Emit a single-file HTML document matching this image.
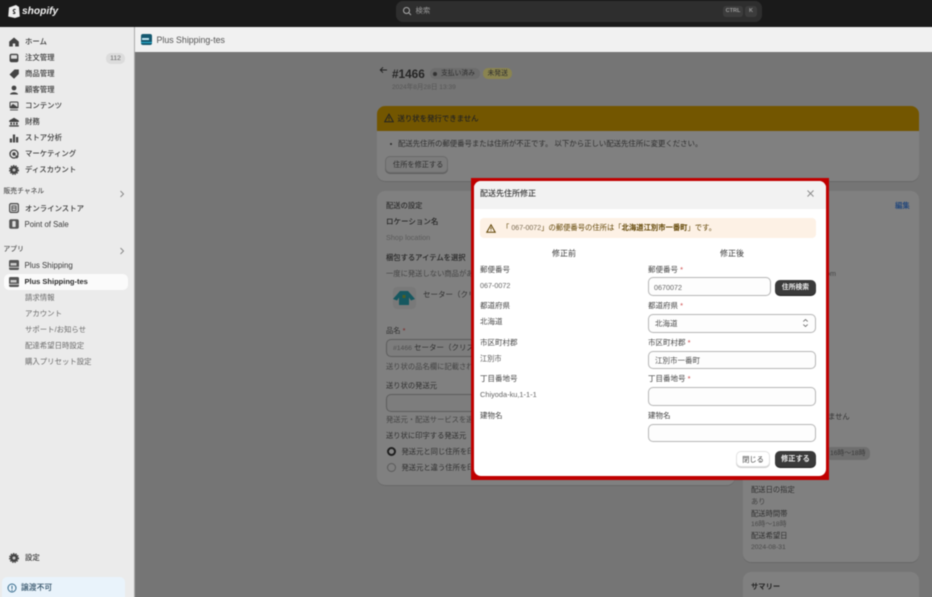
<!DOCTYPE html>
<html lang="ja"><head><meta charset="utf-8"><title>Plus Shipping-tes</title>
<style>
*{box-sizing:border-box}
html,body{margin:0;padding:0;width:932px;height:597px;overflow:hidden;background:#757575}
body{font-family:"Liberation Sans","Noto Sans CJK JP",sans-serif;position:relative;color:#303030}
#r{position:absolute;left:-6px;top:-6px;width:944px;height:609px;overflow:hidden;filter:blur(.5px)}
#i{position:absolute;left:6px;top:6px;width:932px;height:597px}
.a{position:absolute}
.t{position:absolute;white-space:nowrap;line-height:12px;font-size:7.4px}
.s{color:#3a3a3a;font-weight:500;font-size:7.4px}
.sub{color:#6a6a6a;font-size:7.4px}
.ic{position:absolute;width:10px;height:10px}
.bg{color:#2e2e2e;font-size:7.3px}
.bl{color:#252525}
.card{position:absolute;background:#808080;border-radius:8px;box-shadow:0 1px 0 #6a6a6a}
.l{color:#444;font-size:7.5px}
.v{color:#666;font-size:7.2px}
.inp{position:absolute;background:#fdfdfd;border:1px solid #b5b5b5;border-radius:5px;height:18.5px;font-size:7.5px;line-height:17px;padding-left:6px;color:#4a4a4a;white-space:nowrap}
.req{color:#c44}
.btn{position:absolute;border-radius:5px;font-size:7.2px;text-align:center;white-space:nowrap}
.dark{background:#3a3a3a;color:#eee;font-weight:700;box-shadow:0 1px 0 #222}
</style></head><body><div id="r"><div id="i">

<!-- top bar -->
<div class="a" style="left:-6px;top:-6px;width:944px;height:33px;background:#1a1a1a"></div>
<svg class="a" style="left:8px;top:4px" width="12" height="14" viewBox="0 0 12 14"><path d="M1 3.500 L8 1 L11 3 L11.800 12.500 L7 14 L.2 12.500Z" fill="#eee"/><path d="M7.600 5.600c-.5-.3-2.200-.5-2.400.9-.1 1.300 2 1.300 1.800 2.500-.2.800-1.400.6-2 .2" stroke="#1a1a1a" stroke-width="1" fill="none"/></svg>
<div class="t" style="left:22px;top:6px;color:#f0f0f0;font-size:10.200px;font-weight:700;font-style:italic">shopify</div>
<div class="a" style="left:396px;top:1px;width:366px;height:21px;background:#2e2e2e;border-radius:7px"></div>
<svg class="a" style="left:402px;top:6px" width="10" height="10" viewBox="0 0 10 10"><circle cx="4.500" cy="4.500" r="3" stroke="#aaa" fill="none"/><path d="M7 7l2 2" stroke="#aaa"/></svg>
<div class="t" style="left:415.500px;top:5px;color:#999;font-size:7.400px">検索</div>
<div class="a" style="left:723px;top:6px;width:20px;height:11px;background:#3c3c3c;border-radius:3px;color:#9a9a9a;font-size:5.500px;line-height:11px;text-align:center;font-weight:700">CTRL</div>
<div class="a" style="left:745px;top:6px;width:12px;height:11px;background:#3c3c3c;border-radius:3px;color:#9a9a9a;font-size:5.500px;line-height:11px;text-align:center;font-weight:700">K</div>

<!-- sidebar -->
<div class="a" style="left:-6px;top:27px;width:140px;height:576px;background:#ebebeb"></div>
<div class="a" style="left:134px;top:27px;width:1px;height:576px;background:#a9a9a9"></div>

<svg class="ic" style="left:9px;top:37px" viewBox="0 0 10 10"><path d="M5 .5 9.800 4.600V9.500H6.200V6.500H3.800V9.500H.2V4.600Z" fill="#444"/></svg>
<div class="t s" style="left:25px;top:36px">ホーム</div>
<svg class="ic" style="left:9px;top:53px" viewBox="0 0 10 10"><rect x=".6" y=".8" width="8.800" height="8.400" rx="2" fill="#444"/><rect x="2" y="2.100" width="6" height="3.600" rx=".5" fill="#ddd"/></svg>
<div class="t s" style="left:25px;top:52px">注文管理</div>
<div class="a" style="left:106px;top:52.500px;width:19px;height:11px;background:#dcdcdc;border-radius:5px;color:#666;font-size:6.800px;line-height:11px;text-align:center">112</div>
<svg class="ic" style="left:9px;top:69px" viewBox="0 0 10 10"><path d="M.5 5.500 5.500.5H9.800V5L5 9.800Z" fill="#444"/></svg>
<div class="t s" style="left:25px;top:68px">商品管理</div>
<svg class="ic" style="left:9px;top:85px" viewBox="0 0 10 10"><circle cx="5" cy="3" r="2.400" fill="#444"/><path d="M1 9.500C1 6.500 9 6.500 9 9.500Z" fill="#444"/></svg>
<div class="t s" style="left:25px;top:84px">顧客管理</div>
<svg class="ic" style="left:9px;top:101px" viewBox="0 0 10 10"><rect x="1" y="1" width="8" height="6" rx="1" fill="#ddd" stroke="#444"/><path d="M1.600 6 4 3.500 8.400 6.500H1.600ZM1 8.900H9" fill="#444" stroke="#444" stroke-width=".9"/></svg>
<div class="t s" style="left:25px;top:100px">コンテンツ</div>
<svg class="ic" style="left:9px;top:117px" viewBox="0 0 10 10"><path d="M5 .8 9.800 3.500V5H.2V3.500ZM1.300 5.500H3V7.800H1.300ZM4.200 5.500H5.800V7.800H4.200ZM7 5.500H8.700V7.800H7ZM.2 8.200H9.800V9.600H.2Z" fill="#444"/></svg>
<div class="t s" style="left:25px;top:116px">財務</div>
<svg class="ic" style="left:9px;top:133px" viewBox="0 0 10 10"><path d="M.8 5.500H3V9.500H.8ZM3.900 1.500H6.100V9.500H3.900ZM7 4H9.200V9.500H7Z" fill="#444"/></svg>
<div class="t s" style="left:25px;top:132px">ストア分析</div>
<svg class="ic" style="left:9px;top:149px" viewBox="0 0 10 10"><circle cx="5" cy="5" r="4" stroke="#444" stroke-width="1.300" fill="none"/><circle cx="5" cy="5" r="1.700" fill="#444"/><path d="M6 6 9.800 7.500 7.800 9.800Z" fill="#444"/></svg>
<div class="t s" style="left:25px;top:148px">マーケティング</div>
<svg class="ic" style="left:9px;top:165px" viewBox="0 0 10 10"><circle cx="5" cy="5" r="4" fill="#444"/><circle cx="5" cy="5" r="4.500" fill="none" stroke="#444" stroke-width="1" stroke-dasharray="1.500 1"/><circle cx="5" cy="5" r="1.500" fill="#c4c4c4"/></svg>
<div class="t s" style="left:25px;top:164px">ディスカウント</div>

<div class="t" style="left:3.500px;top:186px;color:#555;font-size:6.800px;font-weight:500">販売チャネル</div>
<svg class="a" style="left:119px;top:190px" width="6" height="8" viewBox="0 0 6 8"><path d="M1.500 1 4.500 4 1.500 7" stroke="#8a8a8a" fill="none"/></svg>
<svg class="ic" style="left:9px;top:203px" viewBox="0 0 10 10"><rect x=".6" y=".6" width="8.800" height="8.800" rx="1.500" fill="#ccc" stroke="#444" stroke-width="1.100"/><path d="M2.800 3H7.200M3 3V7.500H7V3M3 5H7" stroke="#444" stroke-width=".8" fill="none"/></svg>
<div class="t s" style="left:25px;top:202.500px">オンラインストア</div>
<svg class="ic" style="left:9px;top:219px" viewBox="0 0 10 10"><rect x=".2" y=".2" width="9.600" height="9.600" rx="1.800" fill="#555"/><rect x="3.300" y="2" width="3.400" height="6" rx=".8" fill="#ddd"/></svg>
<div class="t s" style="left:24.500px;top:218.500px;font-size:7.800px">Point of Sale</div>

<div class="t" style="left:3.500px;top:243.500px;color:#555;font-size:6.800px;font-weight:500">アプリ</div>
<svg class="a" style="left:119px;top:247px" width="6" height="8" viewBox="0 0 6 8"><path d="M1.500 1 4.500 4 1.500 7" stroke="#8a8a8a" fill="none"/></svg>
<svg class="ic" style="left:9px;top:260px" viewBox="0 0 10 10"><rect width="10" height="10" rx="1.500" fill="#555"/><rect x="1.500" y="3" width="6" height="2.500" fill="#ccc"/><rect y="6.800" width="10" height="1" fill="#ccc"/></svg>
<div class="t s" style="left:24.500px;top:259.500px;font-size:7.900px">Plus Shipping</div>
<div class="a" style="left:4px;top:274px;width:124px;height:16px;background:#fbfbfb;border-radius:5px"></div>
<svg class="ic" style="left:9px;top:276.500px" viewBox="0 0 10 10"><rect width="10" height="10" rx="1.500" fill="#555"/><rect x="1.500" y="3" width="6" height="2.500" fill="#ccc"/><rect y="6.800" width="10" height="1" fill="#ccc"/></svg>
<div class="t" style="left:24.500px;top:275.500px;color:#2a2a2a;font-weight:700;font-size:7.500px">Plus Shipping-tes</div>
<div class="t sub" style="left:25px;top:291.500px">請求情報</div>
<div class="t sub" style="left:25px;top:307.500px">アカウント</div>
<div class="t sub" style="left:25px;top:323.500px">サポート/お知らせ</div>
<div class="t sub" style="left:25px;top:339.500px">配達希望日時設定</div>
<div class="t sub" style="left:25px;top:355.500px">購入プリセット設定</div>

<svg class="ic" style="left:9px;top:553px" viewBox="0 0 10 10"><circle cx="5" cy="5" r="4" fill="#444"/><circle cx="5" cy="5" r="4.500" fill="none" stroke="#444" stroke-width="1" stroke-dasharray="1.500 1"/><circle cx="5" cy="5" r="1.500" fill="#c4c4c4"/></svg>
<div class="t s" style="left:25px;top:551.500px">設定</div>
<div class="a" style="left:2px;top:577px;width:123px;height:26px;background:#e9f3fb;border-radius:5px"></div>
<svg class="ic" style="left:7px;top:582.500px" viewBox="0 0 10 10"><circle cx="5" cy="5" r="4" stroke="#356a8c" fill="none"/><path d="M5 2.800V6" stroke="#356a8c"/><circle cx="5" cy="7.400" r=".6" fill="#356a8c"/></svg>
<div class="t" style="left:21px;top:581.500px;color:#2f4f66;font-weight:500;font-size:7.800px">譲渡不可</div>

<!-- app bar -->
<div class="a" style="left:135px;top:27px;width:803px;height:25px;background:#f1f1f1"></div>
<div class="a" style="left:141px;top:34px;width:11px;height:11px;border-radius:2px;background:#14586f"></div>
<div class="a" style="left:142px;top:38px;width:7px;height:2px;background:#bfe3ee"></div>
<div class="a" style="left:141px;top:41.500px;width:11px;height:1px;background:#2ab0d0"></div>
<div class="t" style="left:156.500px;top:34px;color:#555;font-size:8.800px">Plus Shipping-tes</div>

<!-- dimmed content -->
<div class="a" style="left:135px;top:52px;width:803px;height:551px;background:#757575"></div>
<svg class="a" style="left:379px;top:66px" width="9" height="8" viewBox="0 0 9 8"><path d="M8 4H1.500M4 1.300 1.300 4 4 6.700" stroke="#222" stroke-width="1" fill="none"/></svg>
<div class="t bl" style="left:392px;top:68px;font-size:11.800px;font-weight:700">#1466</div>
<div class="a" style="left:430px;top:68px;width:50px;height:11px;background:#6c6c6c;border-radius:5px"></div>
<div class="a" style="left:433px;top:71.500px;width:4px;height:4px;border-radius:50%;background:#333"></div>
<div class="t bg" style="left:441px;top:68px;font-size:6.800px">支払い済み</div>
<div class="a" style="left:483px;top:68px;width:29px;height:11px;background:#8a8450;border-radius:5px"></div>
<div class="t bg" style="left:487.500px;top:68px;font-size:6.800px">未発送</div>
<div class="t" style="left:392px;top:82px;color:#555;font-size:6.600px">2024年8月28日 13:39</div>

<div class="card" style="left:377px;top:106px;width:542px;height:75px;overflow:hidden">
<div class="a" style="left:0;top:0;width:542px;height:25px;background:#735600"></div></div>
<svg class="a" style="left:384px;top:113px" width="10" height="10" viewBox="0 0 10 10"><path d="M5 1.200 9.300 8.800H.7Z" stroke="#222" fill="none"/><path d="M5 4V6.200M5 7V7.800" stroke="#222"/></svg>
<div class="t" style="left:397.500px;top:113px;color:#222;font-size:7.400px;font-weight:500">送り状を発行できません</div>
<div class="a" style="left:389.500px;top:142.500px;width:2.500px;height:2.500px;border-radius:50%;background:#2a2a2a"></div>
<div class="t bg" style="left:398px;top:138px;font-size:7.400px">配送先住所の郵便番号または住所が不正です。 以下から正しい配送先住所に変更ください。</div>
<div class="a" style="left:386px;top:157px;width:61px;height:15px;background:#7c7c7c;border-radius:4px;box-shadow:0 0 0 1px #6a6a6a,0 1px 0 1px #5f5f5f"></div>
<div class="t bg" style="left:393px;top:158.500px;font-size:7.200px">住所を修正する</div>

<div class="card" style="left:377px;top:191px;width:358px;height:294px"></div>
<div class="t bg" style="left:386px;top:199.500px;font-weight:500">配送の設定</div>
<div class="t bl" style="left:386px;top:215.500px;font-weight:500;font-size:7.500px">ロケーション名</div>
<div class="t" style="left:386px;top:232px;color:#5a5a5a;font-size:7.300px">Shop location</div>
<div class="t bl" style="left:386px;top:251.500px;font-weight:500;font-size:7.300px">梱包するアイテムを選択</div>
<div class="t" style="left:386px;top:268px;color:#444;font-size:7.300px">一度に発送しない商品がある</div>
<div class="a" style="left:393px;top:287px;width:23px;height:22px;background:#797979;border-radius:4px"></div>
<svg class="a" style="left:392px;top:290px" width="24" height="16" viewBox="0 0 24 16"><path d="M8 1H16L23 9 19 10.500 17 7.500V15H7V7.500L5 10.500 1 9Z" fill="#165860"/><rect x="10.500" y="5" width="3" height="3" fill="#4f5f22"/></svg>
<div class="t bg" style="left:423px;top:289px;font-size:7.500px">セーター（クリ</div>
<div class="t bg" style="left:386px;top:325px">品名 <span style="color:#7a2222">*</span></div>
<div class="a" style="left:386px;top:339px;width:100px;height:18px;background:#7d7d7d;border:1px solid #5d5d5d;border-radius:5px"></div>
<div class="t bg" style="left:393px;top:342px;font-size:7.500px"><span style="color:#4f4f4f;font-size:6.800px">#1466</span> セーター（クリス</div>
<div class="t" style="left:386px;top:361px;color:#444;font-size:7.300px">送り状の品名欄に記載される</div>
<div class="t bg" style="left:386px;top:380px;">送り状の発送元</div>
<div class="a" style="left:386px;top:394px;width:100px;height:18px;background:#7d7d7d;border:1px solid #5d5d5d;border-radius:5px"></div>
<div class="t" style="left:386px;top:414px;color:#444;font-size:7.300px">発送元・配送サービスを選択</div>
<div class="t bg" style="left:386px;top:430px">送り状に印字する発送元</div>
<div class="a" style="left:387px;top:447px;width:9px;height:9px;border-radius:50%;border:2.600px solid #1f1f1f;background:#858585"></div>
<div class="t bg" style="left:401.500px;top:446px">発送元と同じ住所を印字</div>
<div class="a" style="left:387px;top:463px;width:9px;height:9px;border-radius:50%;border:1px solid #5a5a5a"></div>
<div class="t bg" style="left:401.500px;top:462px">発送元と違う住所を印字</div>

<div class="card" style="left:743px;top:191px;width:176px;height:371px"></div>
<div class="t" style="left:895px;top:199.500px;color:#17407a;font-size:7.400px;font-weight:500">編集</div>
<div class="t" style="left:826px;top:268px;color:#444;font-size:7.200px">om</div>
<div class="t" style="left:828px;top:411px;color:#333;font-size:7.300px">ません</div>
<div class="a" style="left:826px;top:447px;width:44px;height:13px;background:#6e6e6e;border-radius:5px"></div>
<div class="t" style="left:830px;top:447.500px;color:#3a3a3a;font-size:6.800px">16時～18時</div>
<div class="t" style="left:751px;top:484px;color:#2e2e2e;font-size:7.300px">配送日の指定</div>
<div class="t" style="left:751px;top:496px;color:#444;font-size:7.300px">あり</div>
<div class="t" style="left:751px;top:507.500px;color:#2e2e2e;font-size:7.300px">配送時間帯</div>
<div class="t" style="left:751px;top:518.500px;color:#4a4a4a;font-size:6.800px">16時～18時</div>
<div class="t" style="left:751px;top:530px;color:#2e2e2e;font-size:7.300px">配送希望日</div>
<div class="t" style="left:751px;top:541.500px;color:#4a4a4a;font-size:6.800px">2024-08-31</div>
<div class="card" style="left:743px;top:572px;width:176px;height:40px"></div>
<div class="t bl" style="left:751px;top:581px;font-weight:700;font-size:7.300px">サマリー</div>

<!-- modal -->
<div class="a" style="left:471px;top:178px;width:358px;height:302px;background:#c00000"></div>
<div class="a" style="left:474px;top:181px;width:352px;height:295px;background:#fff;border-radius:7px;overflow:hidden">
<div class="a" style="left:0;top:0;width:352px;height:28px;background:#f2f2f2"></div></div>
<div class="t" style="left:480px;top:188px;color:#3a3a3a;font-size:8px;font-weight:500">配送先住所修正</div>
<svg class="a" style="left:806px;top:189px" width="9" height="9" viewBox="0 0 9 9"><path d="M1.500 1.500 7.500 7.500M7.500 1.500 1.500 7.500" stroke="#8a8a8a" stroke-width=".9"/></svg>

<div class="a" style="left:480px;top:218px;width:336px;height:20px;background:#fdf1e5;border-radius:4px"></div>
<svg class="a" style="left:486px;top:223.500px" width="10" height="9" viewBox="0 0 10 9"><path d="M5 .8 9.200 8.200H.8Z" stroke="#5e4200" fill="none"/><path d="M5 3.200V5.500M5 6.200V7" stroke="#5e4200" stroke-width=".9"/></svg>
<div class="t" style="left:502px;top:222px;color:#5e4200;font-size:7.300px;letter-spacing:.02px">「 <span style="color:#7a6a50;font-size:7px">067-0072</span>」の郵便番号の住所は「<b style="font-weight:700">北海道江別市一番町</b>」です。</div>

<div class="t" style="left:552px;top:248px;color:#3a3a3a;font-size:8px">修正前</div>
<div class="t" style="left:720px;top:248px;color:#3a3a3a;font-size:8px">修正後</div>

<div class="t l" style="left:480px;top:263.500px">郵便番号</div>
<div class="t v" style="left:480px;top:280px;font-size:7.200px">067-0072</div>
<div class="t l" style="left:480px;top:300px">都道府県</div>
<div class="t l" style="left:480px;top:316px;color:#4a4a4a">北海道</div>
<div class="t l" style="left:480px;top:336.500px">市区町村郡</div>
<div class="t v" style="left:480px;top:353px;color:#555">江別市</div>
<div class="t l" style="left:480px;top:373px">丁目番地号</div>
<div class="t v" style="left:480px;top:389px;font-size:7.400px">Chiyoda-ku,1-1-1</div>
<div class="t l" style="left:480px;top:409.500px">建物名</div>

<div class="t l" style="left:648px;top:263.500px">郵便番号 <span class="req">*</span></div>
<div class="inp" style="left:648px;top:277px;width:123px;color:#666;font-size:7.200px;line-height:19px;padding-left:5px">0670072</div>
<div class="btn dark" style="left:775px;top:280px;width:41px;height:15px;line-height:15px;font-size:6.800px">住所検索</div>
<div class="t l" style="left:648px;top:300px">都道府県 <span class="req">*</span></div>
<div class="inp" style="left:648px;top:314px;width:168px;">北海道</div>
<svg class="a" style="left:802px;top:318px" width="7" height="10" viewBox="0 0 7 10"><path d="M1.300 3.500 3.500 1.500 5.700 3.500M1.300 6.500 3.500 8.500 5.700 6.500" stroke="#555" stroke-width=".8" fill="none"/></svg>
<div class="t l" style="left:648px;top:336.500px">市区町村郡 <span class="req">*</span></div>
<div class="inp" style="left:648px;top:350.500px;width:168px">江別市一番町</div>
<div class="t l" style="left:648px;top:373px">丁目番地号 <span class="req">*</span></div>
<div class="inp" style="left:648px;top:387px;width:168px"></div>
<div class="t l" style="left:648px;top:409.500px">建物名</div>
<div class="inp" style="left:648px;top:423.500px;width:168px"></div>

<div class="btn" style="left:736px;top:451px;width:34px;height:16px;line-height:15px;background:#fff;border:1px solid #e2e2e2;box-shadow:0 1px 0 #ccc;color:#444">閉じる</div>
<div class="btn dark" style="left:775px;top:451px;width:41px;height:16px;line-height:16px">修正する</div>

</div></div></body></html>
